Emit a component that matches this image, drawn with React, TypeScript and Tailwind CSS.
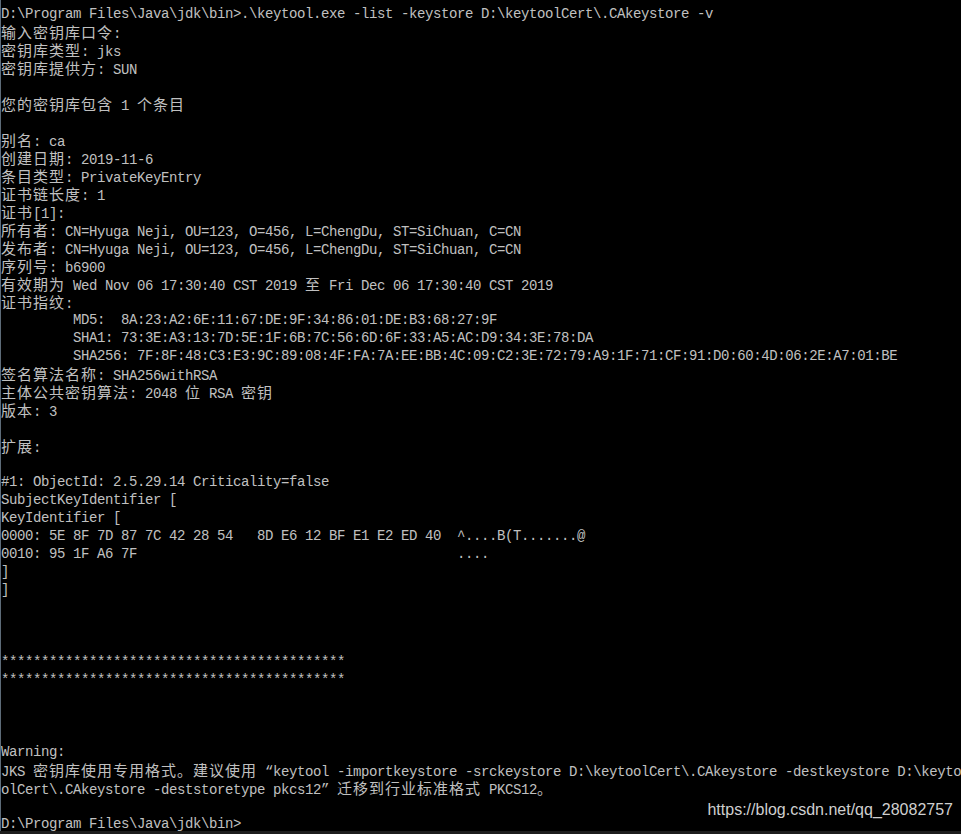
import React from "react";

// console output, one entry per 18px row
const lines: string[] = [
  "D:\\Program Files\\Java\\jdk\\bin>.\\keytool.exe -list -keystore D:\\keytoolCert\\.CAkeystore -v",
  "输入密钥库口令:",
  "密钥库类型: jks",
  "密钥库提供方: SUN",
  "",
  "您的密钥库包含 1 个条目",
  "",
  "别名: ca",
  "创建日期: 2019-11-6",
  "条目类型: PrivateKeyEntry",
  "证书链长度: 1",
  "证书[1]:",
  "所有者: CN=Hyuga Neji, OU=123, O=456, L=ChengDu, ST=SiChuan, C=CN",
  "发布者: CN=Hyuga Neji, OU=123, O=456, L=ChengDu, ST=SiChuan, C=CN",
  "序列号: b6900",
  "有效期为 Wed Nov 06 17:30:40 CST 2019 至 Fri Dec 06 17:30:40 CST 2019",
  "证书指纹:",
  "         MD5:  8A:23:A2:6E:11:67:DE:9F:34:86:01:DE:B3:68:27:9F",
  "         SHA1: 73:3E:A3:13:7D:5E:1F:6B:7C:56:6D:6F:33:A5:AC:D9:34:3E:78:DA",
  "         SHA256: 7F:8F:48:C3:E3:9C:89:08:4F:FA:7A:EE:BB:4C:09:C2:3E:72:79:A9:1F:71:CF:91:D0:60:4D:06:2E:A7:01:BE",
  "签名算法名称: SHA256withRSA",
  "主体公共密钥算法: 2048 位 RSA 密钥",
  "版本: 3",
  "",
  "扩展:",
  "",
  "#1: ObjectId: 2.5.29.14 Criticality=false",
  "SubjectKeyIdentifier [",
  "KeyIdentifier [",
  "0000: 5E 8F 7D 87 7C 42 28 54   8D E6 12 BF E1 E2 ED 40  ^....B(T.......@",
  "0010: 95 1F A6 7F                                        ....",
  "]",
  "]",
  "",
  "",
  "",
  "*******************************************",
  "*******************************************",
  "",
  "",
  "",
  "Warning:",
  "JKS 密钥库使用专用格式。建议使用 \u201ckeytool -importkeystore -srckeystore D:\\keytoolCert\\.CAkeystore -destkeystore D:\\keyto",
  "olCert\\.CAkeystore -deststoretype pkcs12\u201d 迁移到行业标准格式 PKCS12。",
  "",
  "D:\\Program Files\\Java\\jdk\\bin>",
];

const CJK_RUN = /([\u2E80-\u9FFF\u3000-\u303F\uFF00-\uFFEF]+)/;

const Line = ({ text }: { text: string }) => {
  const parts = text.split(CJK_RUN).filter((p) => p !== "");
  return (
    <div className="h-[18px] leading-[18px] whitespace-pre">
      {parts.map((p, i) =>
        CJK_RUN.test(p) ? (
          <span
            key={i}
            className="inline-block h-[18px] leading-[18px] font-['Noto_Sans_CJK_SC',sans-serif] text-[15px] tracking-[1px]"
          >
            {p}
          </span>
        ) : (
          <span key={i}>{p}</span>
        )
      )}
    </div>
  );
};

export default function App() {
  return (
    <div className="relative h-[834px] w-full overflow-hidden bg-black flex flex-col">
      <div className="flex-1 overflow-hidden border-l border-[#5d6b78] pt-[5px] text-[#c0c0c0] font-['Liberation_Mono','Noto_Sans_CJK_SC',monospace] text-[14px] tracking-[-0.4px]">
        {lines.map((l, i) => (
          <Line key={i} text={l} />
        ))}
      </div>
      <div className="h-[3px] bg-[#1c1c1c]" />
      {/* watermark */}
      <div className="absolute right-[8px] top-[800px] leading-[20px] text-[16px] text-[#cfcfcf] font-['Liberation_Sans',Arial,sans-serif] [text-shadow:0_0_2px_#000]">
        https://blog.csdn.net/qq_28082757
      </div>
    </div>
  );
}
